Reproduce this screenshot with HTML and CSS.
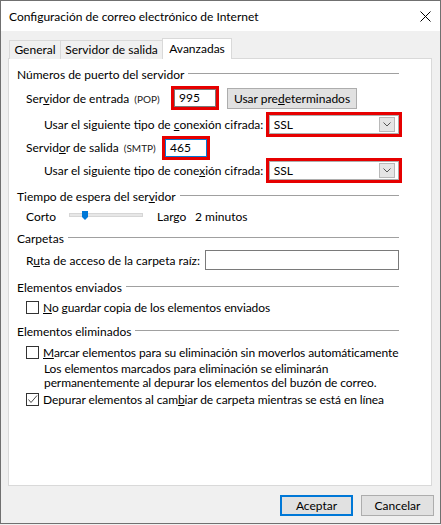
FILE: index.html
```html
<!DOCTYPE html>
<html lang="es">
<head>
<meta charset="utf-8">
<title>Configuración de correo electrónico de Internet</title>
<link rel="stylesheet" href="styles.css">
</head>
<body>
<div class="window">
  <div class="titlebar">
    <span class="title">Configuración de correo electrónico de Internet</span>
    <svg class="close" width="11" height="11" viewBox="0 0 11 11"><path d="M0.5 0.5 L10.5 10.5 M10.5 0.5 L0.5 10.5" stroke="#000" stroke-width="1" fill="none"/></svg>
  </div>
  <div class="client">
    <div class="tabs">
      <div class="tab t-gen">General</div>
      <div class="tab t-srv">Servidor de salida</div>
      <div class="tab t-adv active">Avanzadas</div>
    </div>
    <div class="panel">
      <div class="row hdr">Números de puerto del servidor</div>

      <div class="row r-in i1">
        <span class="lbl w-in">Ser<u>v</u>idor de entrada <small>(POP)</small></span>
        <div class="edit mark e-in">995</div>
        <div class="btn pred">Usar pre<u>d</u>eterminados</div>
      </div>

      <div class="row r-c1 i2">
        <span class="lbl w-c">Usar el siguiente tipo de <u>c</u>onexión cifrada:</span>
        <div class="combo mark"><span class="combo-val">SSL</span><span class="drop"><svg width="8" height="5" viewBox="0 0 8 5"><path d="M0.5 0.5 L4 4 L7.5 0.5" stroke="#555" fill="none"/></svg></span></div>
      </div>

      <div class="row r-out i1">
        <span class="lbl w-out">Servid<u>o</u>r de salida <small>(SMTP)</small></span>
        <div class="edit focus mark">465</div>
      </div>

      <div class="row r-c2 i2">
        <span class="lbl w-c">Usar el siguiente tipo de cone<u>x</u>ión cifrada:</span>
        <div class="combo mark"><span class="combo-val">SSL</span><span class="drop"><svg width="8" height="5" viewBox="0 0 8 5"><path d="M0.5 0.5 L4 4 L7.5 0.5" stroke="#555" fill="none"/></svg></span></div>
      </div>

      <div class="row hdr h-time">Tiempo de espera del ser<u>v</u>idor</div>

      <div class="row r-slider i1">
        <span class="w-corto">Corto</span>
        <div class="slider">
          <div class="track"></div>
          <svg class="thumb" width="6" height="9" viewBox="0 0 6 9"><path d="M0 0 H6 V6 L3 9 L0 6 Z" fill="#0078d7"/></svg>
        </div>
        <span class="w-largo">Largo</span>
        <span>2 minutos</span>
      </div>

      <div class="row hdr h-carp">Carpetas</div>

      <div class="row r-ruta i1">
        <span class="lbl w-ruta">R<u>u</u>ta de acceso de la carpeta raíz:</span>
        <div class="edit root"></div>
      </div>

      <div class="row hdr h-env">Elementos enviados</div>

      <div class="row r-chk i1">
        <span class="cb"></span>
        <span><u>N</u>o guardar copia de los elementos enviados</span>
      </div>

      <div class="row hdr h-del">Elementos eliminados</div>

      <div class="row r-chk r-marcar i1">
        <span class="cb"></span>
        <span><u>M</u>arcar elementos para su eliminación sin moverlos automáticamente</span>
      </div>

      <p class="note">Los elementos marcados para eliminación se eliminarán<br>permanentemente al depurar los elementos del buzón de correo.</p>

      <div class="row r-chk r-dep i1">
        <span class="cb checked"><svg width="11" height="11" viewBox="0 0 11 11"><path d="M1.5 5.5 L4 8.5 L10 1.5" stroke="#4a4a4a" stroke-width="1" fill="none"/></svg></span>
        <span>Depurar elementos al cam<u>b</u>iar de carpeta mientras se está en línea</span>
      </div>
    </div>
    <div class="buttons">
      <div class="btn dlg default">Aceptar</div>
      <div class="btn dlg">Cancelar</div>
    </div>
  </div>
</div>
</body>
</html>
```

FILE: styles.css
```css
* { box-sizing: border-box; }

html, body {
  margin: 0;
  padding: 0;
  background: #f0f0f0;
}

body {
  font-family: "Lato", "Noto Sans", sans-serif;
  font-size: 12px;
  color: #000;
  width: 441px;
  height: 525px;
  overflow: hidden;
}

.window {
  width: 441px;
  height: 524px;
  border: 1px solid #707070;
  background: #f0f0f0;
  display: flex;
  flex-direction: column;
}

.titlebar {
  height: 30px;
  background: #fff;
  display: flex;
  align-items: center;
  padding-left: 8px;
  padding-right: 9px;
}

.title {
  flex: 1;
  font-size: 12px;
  padding-top: 1px;
}

.close {
  display: block;
  margin-top: 1px;
}

.client {
  flex: 1;
  padding-top: 7px;
}

.tabs {
  display: flex;
  align-items: flex-end;
  height: 21px;
  margin-left: 8px;
  margin-bottom: -1px;
  position: relative;
  z-index: 1;
}

.tab {
  height: 19px;
  border: 1px solid #d9d9d9;
  border-bottom: none;
  background: #f0f0f0;
  display: flex;
  align-items: center;
  justify-content: center;
  margin-left: -1px;
  padding-bottom: 1px;
}
.tab:first-child { margin-left: 0; }
.t-gen { width: 52px; }
.t-srv { width: 103px; }
.t-adv { width: 70px; }
.tab.active {
  height: 21px;
  background: #fff;
  padding-bottom: 2px;
}

.panel {
  margin-left: 7px;
  width: 424px;
  height: 428px;
  border: 1px solid #d9d9d9;
  background: #fff;
  padding: 5px 32px 0 8px;
}

.row {
  display: flex;
  align-items: center;
  white-space: nowrap;
}

.hdr {
  height: 20px;
}
.hdr::after {
  content: "";
  flex: 1;
  height: 1px;
  background: #a0a0a0;
  margin-left: 4px;
  margin-bottom: 2px;
}
.h-time { margin-top: 4px; }
.h-carp { margin-top: 2px; }
.h-env { margin-top: 5px; }
.h-del { margin-top: 4px; }

.i1 { padding-left: 9px; }
.i2 { padding-left: 27px; }

.lbl { display: block; }
.lbl small { font-size: 10px; margin-left: 2px; color: #222; }
.w-in { width: 148px; }
.w-out { width: 139px; }
.w-c { width: 226px; }
.w-ruta { width: 179px; }

.r-in { height: 28px; }
.r-c1 { height: 24px; }
.r-out { height: 23px; }
.r-c2 { height: 23px; }

.mark {
  outline: 3px solid #e60000;
  outline-offset: 0;
}

.edit {
  width: 42px;
  height: 18px;
  border: 1px solid #7a7a7a;
  background: #fff;
  padding-left: 4px;
  font-size: 12px;
  line-height: 16px;
}
.edit.focus { border-color: #0078d7; }
.edit.root { width: 195px; height: 20px; }

.btn {
  background: #e1e1e1;
  border: 1px solid #adadad;
  display: flex;
  align-items: center;
  justify-content: center;
  height: 21px;
}
.pred {
  width: 130px;
  margin-left: 11px;
}

.combo {
  width: 131px;
  height: 19px;
  border: 1px solid #adadad;
  background: #fff;
  display: flex;
  align-items: center;
  padding-left: 4px;
  padding-right: 3px;
}
.combo-val { flex: 1; }
.drop {
  width: 16px;
  height: 15px;
  background: #e5e5e5;
  border: 1px solid #b9b9b9;
  display: flex;
  align-items: center;
  justify-content: center;
}
.drop svg { display: block; }

.r-slider { height: 20px; }
.w-corto { width: 43px; }
.slider {
  width: 74px;
  height: 20px;
  position: relative;
  display: flex;
  align-items: center;
}
.track {
  width: 74px;
  height: 4px;
  background: #e7e7e7;
  border: 1px solid #d6d6d6;
  margin-bottom: 2px;
}
.thumb {
  position: absolute;
  left: 13px;
  top: 5px;
}
.w-largo { width: 38px; margin-left: 14px; }

.r-ruta { height: 24px; }

.r-chk { height: 20px; letter-spacing: -0.1px; }
.r-marcar { margin-top: 1px; }
.cb {
  width: 13px;
  height: 13px;
  border: 1px solid #333;
  background: #fff;
  margin-right: 4px;
  flex: none;
}
.cb svg { display: block; }

.note {
  margin: 0;
  padding-left: 27px;
  line-height: 14px;
  height: 27px;
  letter-spacing: -0.1px;
}
.r-dep { margin-top: 0; }

.buttons {
  display: flex;
  justify-content: flex-end;
  gap: 8px;
  margin-top: 9px;
  padding-right: 6px;
}
.dlg { width: 73px; }
.dlg.default {
  border: 2px solid #0078d7;
}
```
